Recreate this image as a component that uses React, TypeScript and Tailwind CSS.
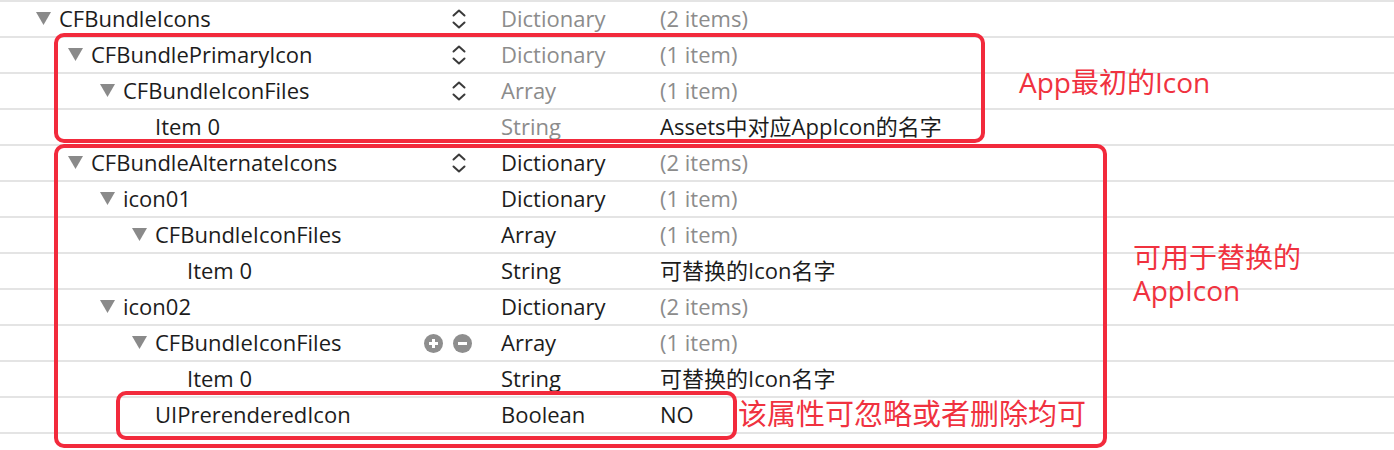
import React from "react";

type Row = {
  level: number;
  key: string;
  open?: boolean;
  ctrl?: "stepper" | "plusminus";
  type: string;
  typeGray?: boolean;
  value: string;
  valueGray?: boolean;
};

const rows: Row[] = [
  { level: 0, key: "CFBundleIcons", open: true, ctrl: "stepper", type: "Dictionary", typeGray: true, value: "(2 items)", valueGray: true },
  { level: 1, key: "CFBundlePrimaryIcon", open: true, ctrl: "stepper", type: "Dictionary", typeGray: true, value: "(1 item)", valueGray: true },
  { level: 2, key: "CFBundleIconFiles", open: true, ctrl: "stepper", type: "Array", typeGray: true, value: "(1 item)", valueGray: true },
  { level: 3, key: "Item 0", type: "String", typeGray: true, value: "Assets中对应AppIcon的名字" },
  { level: 1, key: "CFBundleAlternateIcons", open: true, ctrl: "stepper", type: "Dictionary", value: "(2 items)", valueGray: true },
  { level: 2, key: "icon01", open: true, type: "Dictionary", value: "(1 item)", valueGray: true },
  { level: 3, key: "CFBundleIconFiles", open: true, type: "Array", value: "(1 item)", valueGray: true },
  { level: 4, key: "Item 0", type: "String", value: "可替换的Icon名字" },
  { level: 2, key: "icon02", open: true, type: "Dictionary", value: "(2 items)", valueGray: true },
  { level: 3, key: "CFBundleIconFiles", open: true, ctrl: "plusminus", type: "Array", value: "(1 item)", valueGray: true },
  { level: 4, key: "Item 0", type: "String", value: "可替换的Icon名字" },
  { level: 3, key: "UIPrerenderedIcon", type: "Boolean", value: "NO" },
];

const indent = ["pl-[36px]", "pl-[68px]", "pl-[100px]", "pl-[132px]", "pl-[164px]"];

function Triangle() {
  return (
    <svg width="15" height="13" viewBox="0 0 15 13" className="mt-[2px]">
      <path d="M0 0 H15 L7.5 13 Z" fill="#8a8a8a" />
    </svg>
  );
}

function Stepper() {
  return (
    <svg width="16" height="24" viewBox="0 0 16 24" className="ml-[27px] mt-[3px]">
      <path d="M2.5 8.5 L8 3.5 L13.5 8.5" fill="none" stroke="#3a3a3a" strokeWidth="2" strokeLinecap="round" strokeLinejoin="round" />
      <path d="M2.5 15.5 L8 20.5 L13.5 15.5" fill="none" stroke="#3a3a3a" strokeWidth="2" strokeLinecap="round" strokeLinejoin="round" />
    </svg>
  );
}

function PlusMinus() {
  return (
    <div className="mt-[3px] flex items-center gap-[10px]">
      <svg width="19" height="19" viewBox="0 0 19 19">
        <circle cx="9.5" cy="9.5" r="9.5" fill="#8e8e8e" />
        <path d="M5 9.5 H14 M9.5 5 V14" stroke="#fff" strokeWidth="3" />
      </svg>
      <svg width="19" height="19" viewBox="0 0 19 19">
        <circle cx="9.5" cy="9.5" r="9.5" fill="#8e8e8e" />
        <path d="M5 9.5 H14" stroke="#fff" strokeWidth="3" />
      </svg>
    </div>
  );
}

function PlistRow({ row }: { row: Row }) {
  return (
    <div className="flex h-[36px] items-center border-t-2 border-[#e4e4e4] pb-[3px]">
      <div className={`flex w-[424px] items-center ${indent[row.level]}`}>
        <span className="flex w-[23px] shrink-0">{row.open ? <Triangle /> : null}</span>
        <span className="text-[#1c1c1c]">{row.key}</span>
      </div>
      <div className="flex w-[77px] items-center">
        {row.ctrl === "stepper" ? <Stepper /> : null}
        {row.ctrl === "plusminus" ? <PlusMinus /> : null}
      </div>
      <div className={`w-[159px] ${row.typeGray ? "text-[#8c8c8c]" : "text-[#1c1c1c]"}`}>{row.type}</div>
      <div className={`flex-1 ${row.valueGray ? "text-[#8c8c8c]" : "text-[#1c1c1c]"}`}>{row.value}</div>
    </div>
  );
}

export default function App() {
  return (
    <div
      className="relative h-[450px] w-[1394px] overflow-hidden bg-white text-[22px] leading-none"
      style={{ fontFamily: '"Open Sans", "Noto Sans CJK SC", sans-serif' }}
    >
      {rows.map((r, i) => (
        <PlistRow key={i} row={r} />
      ))}
      <div className="h-[18px] border-t-2 border-[#e4e4e4]" />

      {/* annotation boxes */}
      <div className="absolute left-[54px] top-[33px] h-[110px] w-[931px] rounded-[10px] border-[4px] border-[#f22a3c]" />
      <div className="absolute left-[54px] top-[144px] h-[304px] w-[1053px] rounded-[10px] border-[4px] border-[#f22a3c]" />
      <div className="absolute left-[116px] top-[391px] h-[49px] w-[621px] rounded-[10px] border-[4px] border-[#f22a3c]" />

      <div className="absolute left-[1019px] top-[66px] text-[28px] leading-[32px] text-[#f0323f]">App最初的Icon</div>
      <div className="absolute left-[1133px] top-[241px] flex flex-col gap-[1px] text-[28px] leading-[32px] text-[#f0323f]">
        <span>可用于替换的</span>
        <span>AppIcon</span>
      </div>
      <div className="absolute left-[738px] top-[398px] text-[29px] leading-[32px] text-[#f0323f]">该属性可忽略或者删除均可</div>
    </div>
  );
}
